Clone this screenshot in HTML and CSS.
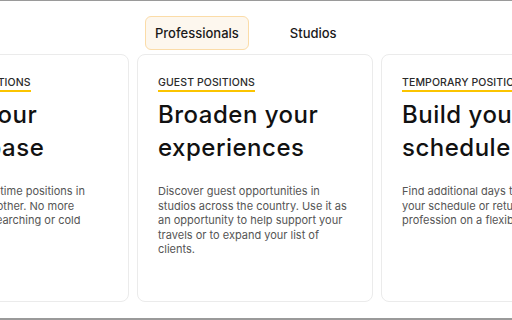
FILE: index.html
```html
<!DOCTYPE html>
<html lang="en">
<head>
<meta charset="utf-8">
<title>Positions</title>
<link rel="stylesheet" href="styles.css">
</head>
<body>
<div class="page">
  <nav class="tabs">
    <button class="tab tab-active">Professionals</button>
    <button class="tab">Studios</button>
  </nav>
  <section class="cards">
    <article class="card">
      <span class="label">Full-time positions</span>
      <h2 class="title">Grow your client base</h2>
      <p class="text">Scout for all full-time positions in spas near each other. No more endless hours searching or cold calling.</p>
    </article>
    <article class="card">
      <span class="label">Guest positions</span>
      <h2 class="title">Broaden your experiences</h2>
      <p class="text">Discover guest opportunities in studios across the country. Use it as an opportunity to help support your travels or to expand your list of clients.</p>
    </article>
    <article class="card">
      <span class="label">Temporary positions</span>
      <h2 class="title">Build your schedule</h2>
      <p class="text">Find additional days to supplement your schedule or return to your profession on a flexible basis.</p>
    </article>
  </section>
</div>
</body>
</html>
```
FILE: styles.css
```css
* { box-sizing: border-box; }
html, body { margin: 0; padding: 0; }
body {
  font-family: Inter, "Noto Sans", sans-serif;
  background: #fff;
  color: #111;
}
.page {
  width: 512px;
  height: 320px;
  border-top: 1px solid #9a9a9a;
  border-bottom: 2px solid #9a9a9a;
  overflow: hidden;
}
.tabs {
  display: flex;
  gap: 31px;
  padding: 15px 0 0 145px;
  height: 53px;
}
.tab {
  font-family: inherit;
  font-size: 13px;
  font-weight: 500;
  color: #1a1a1a;
  background: none;
  border: 1px solid transparent;
  border-radius: 6px;
  height: 34px;
  padding: 0 9px;
  cursor: pointer;
}
.tab-active {
  background: #fdf7ee;
  border-color: #fbdca8;
}
.cards {
  display: flex;
  justify-content: center;
  gap: 8px;
  margin-left: -2px;
}
.card {
  flex: 0 0 236px;
  height: 248px;
  border: 1px solid #ebebeb;
  border-radius: 8px;
  padding: 15px 20px 0 20px;
}
.label {
  display: inline-block;
  font-size: 10.5px;
  font-weight: 500;
  letter-spacing: 0.1px;
  text-transform: uppercase;
  color: #2a2a2a;
  line-height: 13px;
  padding-bottom: 1px;
  border-bottom: 2px solid #fbc400;
}
.title {
  margin: 6px 0 0;
  font-size: 24px;
  font-weight: 500;
  letter-spacing: 0.5px;
  line-height: 33px;
  color: #111;
}
.text {
  margin: 20px 0 0;
  font-size: 11px;
  line-height: 14.5px;
  color: #555;
}
```
